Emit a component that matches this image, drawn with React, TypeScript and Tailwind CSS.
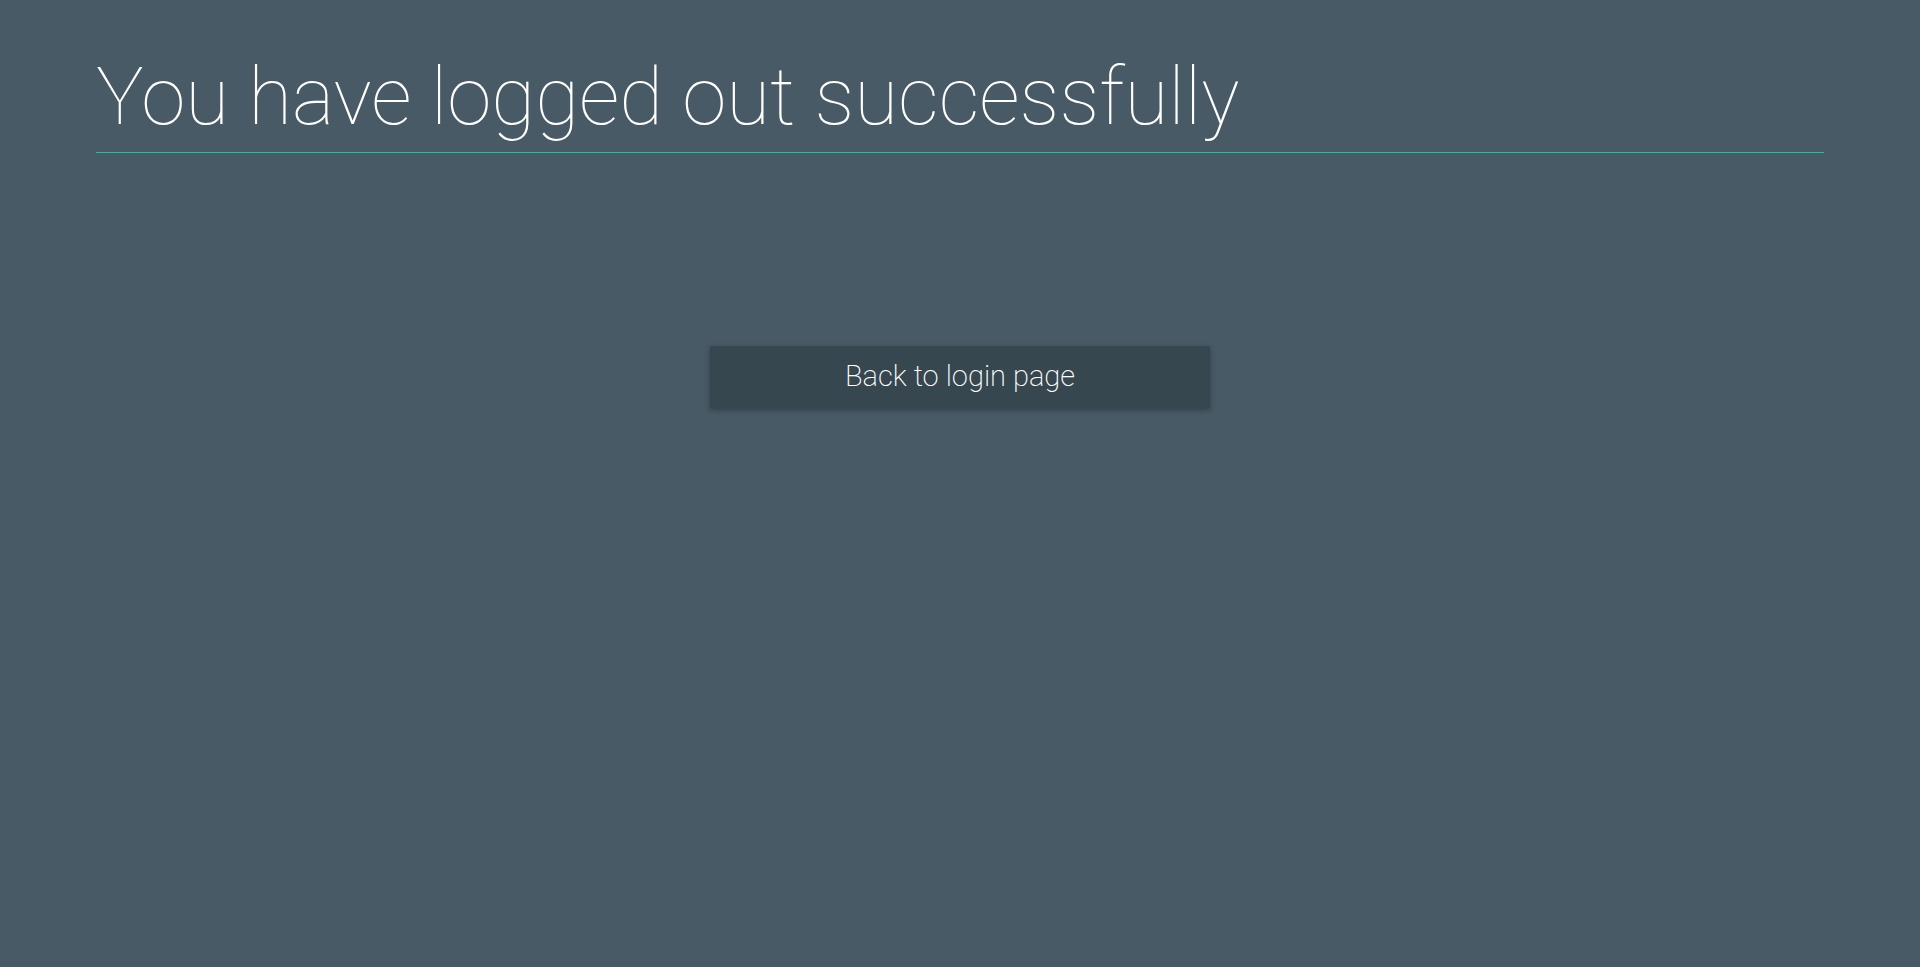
import React from "react";

export default function App() {
    return (
        <div className="min-h-[967px] w-full bg-[#485a66] font-['Roboto',sans-serif] text-white">
            <div className="mx-auto w-[90%] pt-[47px]">
                <h1 className="border-b border-[#10c9a5] pb-[5px] text-[80px] font-thin leading-[100px]">
                    You have logged out successfully
                </h1>
                <div className="mt-[193px] flex justify-center">
                    <button className="h-[62px] w-[500px] bg-[#374750] text-[29px] font-extralight text-white shadow-[0_2px_5px_rgba(0,0,0,0.3)]">
                        Back to login page
                    </button>
                </div>
            </div>
        </div>
    );
}
